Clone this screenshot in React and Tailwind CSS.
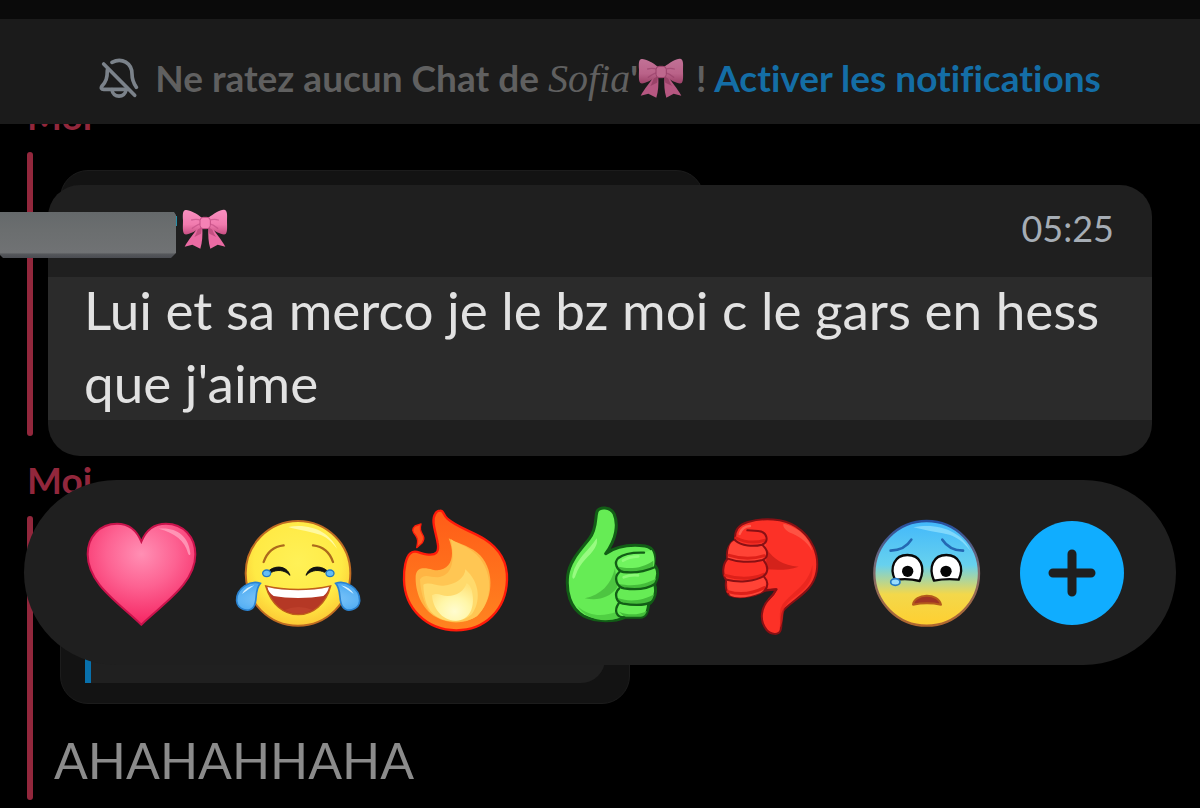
import React from "react";

function Bow({ className }) {
  return (
    <svg viewBox="546 298 136 120" className={className} role="img" aria-label="Nœud rose">
      <defs>
        <linearGradient id="bowWing" x1="0" y1="0" x2="0" y2="1">
          <stop offset="0" stopColor="#f98fc0" />
          <stop offset="0.6" stopColor="#f07bae" />
          <stop offset="1" stopColor="#c84f83" />
        </linearGradient>
      </defs>
      <path d="M594 352 C584 368 564 390 553 411 L576 405 L600 417 C606 398 607 376 606 354 Z" fill="#ea6ba3" />
      <path d="M634 352 C644 368 664 390 675 411 L652 405 L630 417 C624 398 623 376 624 354 Z" fill="#ea6ba3" />
      <path d="M594 352 C590 366 586 376 582 382 L602 372 L605 354 Z" fill="#a83d6c" opacity="0.6" />
      <path d="M634 352 C638 366 642 376 648 382 L627 372 L624 354 Z" fill="#a83d6c" opacity="0.6" />
      <path d="M604 324 C590 312 568 300 556 301 C547 302 547 314 548 332 C548 350 546 366 552 373 C560 378 584 366 604 352 Z" fill="url(#bowWing)" />
      <path d="M624 324 C640 312 660 299 671 300 C681 301 681 314 680 332 C680 350 682 366 676 373 C668 378 644 366 624 352 Z" fill="url(#bowWing)" />
      <path d="M603 332 C592 328 583 328 574 331 M603 342 C592 344 584 350 576 356 M626 332 C637 328 646 328 654 331 M626 342 C637 344 645 350 652 356" fill="none" stroke="#bd4a80" strokeWidth="4" opacity="0.6" strokeLinecap="round" />
      <rect x="599" y="323" width="31" height="34" rx="10" fill="#f582b5" stroke="#c44f85" strokeWidth="3" />
    </svg>
  );
}

function BellOff() {
  return (
    <svg viewBox="50 176 120 120" className="h-10 w-10 shrink-0" fill="none" stroke="#7b828a" strokeWidth="11" strokeLinecap="round" strokeLinejoin="round" aria-hidden="true">
      <path d="M64 194 L157 288" />
      <path d="M89 189 C119 173 149 192 149 224 C149 243 154 252 162 264" />
      <path d="M75 212 C75 237 71 247 59 260 C55 266 57 270 64 270 L136 270" />
      <path d="M89 271 C91 297 129 297 131 271" />
    </svg>
  );
}

function Heart() {
  return (
    <svg viewBox="54 45 378 408" className="block w-full" aria-hidden="true">
      <defs>
        <radialGradient id="heartFill" cx="0.5" cy="0.3" r="0.65">
          <stop offset="0" stopColor="#ff8fb4" />
          <stop offset="0.5" stopColor="#fd6292" />
          <stop offset="1" stopColor="#f62d68" />
        </radialGradient>
      </defs>
      <path d="M244 155 C230 120 205 101 171 101 C119 101 83 141 83 193 C83 280 173 336 244 404 C315 336 406 280 406 193 C406 141 370 101 318 101 C284 101 258 120 244 155 Z" fill="url(#heartFill)" stroke="#c9134c" strokeWidth="6" />
      <path d="M296 116 C345 110 386 135 391 190 C392 197 386 197 384 190 C374 151 346 130 296 116 Z" fill="#ffa3bf" opacity="0.8" />
    </svg>
  );
}

function Joy() {
  return (
    <svg viewBox="525 45 378 408" className="block w-full" aria-hidden="true">
      <defs>
        <radialGradient id="joyFace" cx="0.5" cy="0.4" r="0.6">
          <stop offset="0" stopColor="#fff157" />
          <stop offset="0.7" stopColor="#ffea45" />
          <stop offset="1" stopColor="#fcc935" />
        </radialGradient>
        <radialGradient id="tear" cx="0.5" cy="0.6" r="0.6">
          <stop offset="0" stopColor="#a6dbff" />
          <stop offset="1" stopColor="#4dabf2" />
        </radialGradient>
      </defs>
      <circle cx="714" cy="250" r="157" fill="url(#joyFace)" stroke="#bf6b22" strokeWidth="6" />
      <path d="M685 111 C755 99 810 129 831 176 C812 152 797 139 775 133 C740 121 710 120 685 111 Z" fill="#fff9a0" />
      <path d="M611 216 Q626 171 671 166 M819 216 Q804 171 759 166" fill="none" stroke="#ad6a1c" strokeWidth="7" strokeLinecap="round" />
      <path d="M627 242 C645 226 680 226 690 256 C672 238 650 239 634 247 Z M801 242 C783 226 748 226 738 256 C756 238 778 239 794 247 Z" fill="#111" stroke="#111" strokeWidth="3" />
      <ellipse cx="620" cy="250" rx="12" ry="10" fill="#64bdf5" stroke="#2277c2" strokeWidth="4" />
      <ellipse cx="810" cy="250" rx="12" ry="10" fill="#64bdf5" stroke="#2277c2" strokeWidth="4" />
      <path d="M617 288 C675 302 753 302 812 288 C798 343 758 374 715 374 C671 374 633 343 617 288 Z" fill="#b53825" stroke="#c15e1a" strokeWidth="4" />
      <path d="M622 291 C675 304 753 304 807 291 Q803 309 790 318 C748 326 681 326 641 318 Q626 309 622 291 Z" fill="#fff" />
      <path d="M674 360 Q714 342 757 359 Q715 382 674 360" fill="#d4523c" opacity="0.3" />
      <path d="M601 280 C572 270 528 293 530 333 C532 358 567 370 581 350 C594 332 582 301 601 280 Z M827 280 C856 270 900 293 899 333 C897 358 862 370 848 350 C834 332 846 301 827 280 Z" fill="url(#tear)" stroke="#2b82cf" strokeWidth="5" />
      <path d="M583 286 Q557 291 546 312 Q566 298 583 286 M843 286 Q869 291 881 312 Q861 298 843 286" fill="#d8f1ff" />
    </svg>
  );
}

function Fire() {
  return (
    <svg viewBox="36 45 378 408" className="block w-full" aria-hidden="true">
      <defs>
        <linearGradient id="fireOuter" x1="0" y1="0" x2="0" y2="1">
          <stop offset="0" stopColor="#ff5c18" />
          <stop offset="1" stopColor="#ff8420" />
        </linearGradient>
        <radialGradient id="fireCore" cx="0.55" cy="0.75" r="0.75">
          <stop offset="0" stopColor="#fffcd0" />
          <stop offset="0.5" stopColor="#fff6a8" />
          <stop offset="1" stopColor="#ffe27a" />
        </radialGradient>
      </defs>
      <path d="M123 102 L105 108 C94 117 98 126 106 135 C116 148 113 157 110 173 L127 158 Q134 147 130 138 C123 125 118 119 123 102 Z" fill="#ff501b" stroke="#fa1d0c" strokeWidth="4" strokeLinejoin="round" />
      <path d="M180 62 C192 61 188 73 202 86 C231 112 276 124 313 147 C360 177 383 218 381 270 C378 360 314 421 229 421 C139 420 74 355 72 269 C71 237 77 202 91 190 C105 178 118 190 139 193 C170 198 178 185 173 159 C168 127 152 91 166 71 Q171 62 180 62 Z" fill="url(#fireOuter)" stroke="#ff1a0a" strokeWidth="7" />
      <path d="M206 145 C229 160 260 164 292 188 C344 231 343 321 299 369 C270 402 210 406 169 382 C124 356 105 304 107 257 C111 230 134 233 158 239 C195 247 216 224 216 190 Q216 170 206 145 Z" fill="#ffb544" />
      <path d="M212 147 C240 166 271 170 299 204 C343 262 334 335 291 379 C250 405 189 401 148 365 C131 340 121 300 120 268 C132 250 150 262 172 262 C212 258 228 222 212 147 Z" fill="#ffc653" />
      <path d="M256 238 C302 279 302 337 276 372 C242 403 188 398 160 372 C137 350 131 316 130 284 C151 274 165 289 190 287 C228 284 255 263 256 238 Z" fill="#ffda6c" />
      <path d="M275 300 C288 352 268 392 228 392 C185 393 158 352 156 316 C172 306 183 318 203 318 C231 318 252 303 260 280 Q270 285 275 300 Z" fill="url(#fireCore)" />
    </svg>
  );
}

function ThumbUp() {
  return (
    <svg viewBox="507 45 378 408" className="block w-full" strokeLinecap="round" strokeLinejoin="round" aria-hidden="true">
      <path d="M677 191 C709 169 754 163 795 168 C826 172 826 202 821 223 C838 237 835 265 823 282 C831 300 826 329 806 343 C803 365 799 381 780 382 L735 382 C706 395 651 398 611 378 C569 355 558 304 563 257 C569 211 605 176 628 146 C652 114 644 86 651 65 C658 49 691 50 702 71 C716 103 709 148 677 191 Z" fill="#66ec55" stroke="#125e16" strokeWidth="9" />
      <path d="M650 145 C626 184 590 203 578 253 C574 269 583 271 587 256 C600 215 631 198 645 173 Q654 158 650 145 Z" fill="#a5ff8c" opacity="0.8" />
      <path d="M705 234 C693 285 663 314 614 325 C654 333 689 324 712 292 Z" fill="#45b83b" opacity="0.75" />
      <path d="M592 348 C630 385 680 376 706 367 L720 383 C668 401 616 386 592 348 Z" fill="#50cf43" />
      <path d="M792 188 C759 187 731 191 715 204 C700 218 711 242 730 246 C762 250 799 243 821 232 C825 220 825 195 815 180 Z" fill="#70f45f" stroke="none" />
      <path d="M716 230 C750 239 790 234 820 212 L820 232 C790 246 745 251 720 241 Z M715 281 C752 290 795 286 829 265 L821 283 C791 302 739 304 716 290 Z M713 324 C752 338 793 330 823 312 Q815 343 786 347 C752 351 718 344 713 324 Z M717 365 C743 376 775 376 801 363 Q795 380 783 380 L733 380 Z" fill="#45bd3b" />
      <path d="M792 188 C759 187 731 191 715 204 C700 218 711 242 730 246 C762 250 799 243 826 231 M718 246 C699 263 711 291 732 295 C766 300 801 298 826 281 M717 296 C700 313 710 337 729 341 C761 346 792 347 812 337 M716 340 C701 362 709 382 733 382" fill="none" stroke="#125e16" strokeWidth="7" />
      <path d="M729 212 Q746 200 775 199 M731 262 Q750 254 774 256" fill="none" stroke="#9bff85" strokeWidth="8" opacity="0.7" />
    </svg>
  );
}

function ThumbDown() {
  return (
    <svg viewBox="18 45 378 408" className="block w-full" strokeLinecap="round" strokeLinejoin="round" aria-hidden="true">
      <path d="M228 298 L199 300 C171 317 118 330 89 316 C77 304 75 289 79 270 C64 253 69 221 82 207 C77 185 86 161 105 150 C103 120 115 105 144 96 C190 82 251 85 287 109 C338 142 358 195 350 244 C340 302 290 322 254 357 C239 373 248 399 242 420 C237 437 212 434 200 420 C176 391 184 351 207 327 Q221 314 228 298 Z" fill="#fc3127" stroke="#891014" strokeWidth="6" />
      <path d="M250 101 C299 112 331 147 337 184 C319 150 292 137 267 127 Q247 113 250 101 Z" fill="#ff6250" opacity="0.7" />
      <path d="M200 177 C222 208 248 226 296 230 C263 242 227 239 198 238 Z" fill="#d4221b" />
      <path d="M337 226 C325 285 278 305 247 344 C232 370 246 396 237 420 C263 370 236 368 269 333 C304 306 343 285 337 226 Z" fill="#e2221c" opacity="0.65" />
      <path d="M105 151 C130 168 170 169 197 157 C196 180 204 198 189 207 C154 219 114 212 83 206 C85 175 87 157 105 151 Z M80 270 C118 281 165 274 193 260 C203 285 195 301 181 309 C150 322 112 328 89 316 Z" fill="#ff4336" />
      <path d="M108 144 Q149 164 193 151 M88 196 Q143 213 193 197 M76 256 Q139 275 191 253 M84 305 Q138 321 193 293" fill="none" stroke="#de2019" strokeWidth="9" />
      <path d="M142 121 L174 123 C203 125 208 155 186 164 C160 171 124 168 105 151 M188 166 C207 184 206 204 184 211 C151 219 109 216 83 206 M191 211 C207 231 206 253 182 263 C149 278 106 276 80 269 M192 260 Q211 281 194 302 L230 298 Q221 315 207 327" fill="none" stroke="#891014" strokeWidth="6" />
      <path d="M119 132 Q126 109 150 108" fill="none" stroke="#ff7a67" strokeWidth="7" opacity="0.65" />
    </svg>
  );
}

function Worried() {
  return (
    <svg viewBox="489 45 378 408" className="block w-full" strokeLinecap="round" strokeLinejoin="round" aria-hidden="true">
      <defs>
        <linearGradient id="worriedFace" x1="0" y1="0" x2="0" y2="1">
          <stop offset="0" stopColor="#42b8fb" />
          <stop offset="0.42" stopColor="#67d1ee" />
          <stop offset="0.7" stopColor="#f3d84b" />
          <stop offset="1" stopColor="#ffcf30" />
        </linearGradient>
        <linearGradient id="worriedRim" x1="0" y1="0" x2="0" y2="1">
          <stop offset="0" stopColor="#244fa1" />
          <stop offset="0.45" stopColor="#7c6b71" />
          <stop offset="1" stopColor="#b2672d" />
        </linearGradient>
      </defs>
      <circle cx="680" cy="250" r="157" fill="url(#worriedFace)" stroke="url(#worriedRim)" strokeWidth="7" />
      <path d="M640 112 C718 96 787 127 811 182 C779 143 756 135 728 130 Q685 123 640 112 Z" fill="#a4e9ff" opacity="0.6" />
      <path d="M572 182 Q614 181 634 149 M789 182 Q748 181 727 149" fill="none" stroke="#2468b3" strokeWidth="8" />
      <path d="M585 269 C567 232 584 195 622 195 C661 195 678 230 659 273 Q622 264 585 270 Z M702 272 C684 231 700 195 739 195 C777 195 794 230 776 269 Q739 265 702 272 Z" fill="#fff" stroke="#080808" strokeWidth="7" />
      <circle cx="623" cy="244" r="17" fill="#050505" />
      <circle cx="738" cy="244" r="17" fill="#050505" />
      <ellipse cx="586" cy="276" rx="14" ry="10" fill="#99ddff" stroke="#247ac5" strokeWidth="5" />
      <path d="M639 344 C643 310 715 307 723 344 Q681 336 639 344 Z" fill="#a03524" stroke="#b45b1c" strokeWidth="6" />
    </svg>
  );
}

const reactions = [
  { label: "Cœur", Icon: Heart },
  { label: "Mort de rire", Icon: Joy },
  { label: "Feu", Icon: Fire },
  { label: "Pouce levé", Icon: ThumbUp },
  { label: "Pouce baissé", Icon: ThumbDown },
  { label: "Inquiet", Icon: Worried },
];

function NotificationBanner() {
  return (
    <header className="relative z-10 border-t-[19px] border-[#0a0a0a] bg-[#1b1b1b]">
      <div className="flex h-[105px] items-center justify-center gap-4 pt-3 text-[37px] leading-[48px] font-bold whitespace-nowrap text-[#606060]">
        <BellOff />
        <p className="flex items-center">
          <span>
            Ne ratez aucun Chat de{" "}
            <i className="font-['Liberation_Serif',serif] text-[40px] leading-none font-normal">Sofia</i>'
          </span>
          <Bow className="h-10 w-[46px] opacity-75" />
          <span className="ml-3">
            !{" "}
            <a href="#notifications" className="text-[#146ea6]">Activer les notifications</a>
          </span>
        </p>
      </div>
    </header>
  );
}

function ChatHistory() {
  return (
    <section className="px-[27px] text-[#8b8b8b]">
      <h2 className="-mt-8 h-[60px] text-[37px] leading-[48px] font-bold text-[#92273c]">Moi</h2>
      <div className="flex h-[284px] gap-[27px]">
        <div className="w-[6px] rounded-sm bg-[#92273c]" />
        <div className="mt-[18px] h-[200px] w-[644px] rounded-[28px] border border-[#1c1c1c] bg-[#131313]" />
      </div>
      <h2 className="mt-5 h-[60px] text-[37px] leading-[48px] font-bold text-[#92273c]">Moi</h2>
      <div className="flex h-[284px]">
        <div className="w-[6px] rounded-sm bg-[#92273c]" />
        <div className="flex flex-col">
          <div className="ml-[27px] h-[188px] w-[570px] rounded-[28px] border border-[#1c1c1c] bg-[#131313] px-6 pb-5">
            <div className="h-full rounded-r-[24px] border-l-[6px] border-[#0870ac] bg-[#202020]" />
          </div>
          <p className="mt-6 ml-[21px] text-[50px] leading-[64px]">AHAHAHHAHA</p>
        </div>
      </div>
    </section>
  );
}

function SelectedMessage() {
  return (
    <article className="mx-12 rounded-[32px] bg-[#1f1f1f] pb-9">
      <div className="flex h-[92px] items-center justify-between pr-[38px]">
        <div className="mt-[7px] -ml-12 flex items-center gap-[5px]">
          <svg viewBox="0 0 177 48" className="h-12 w-[177px]" aria-hidden="true">
            <defs>
              <linearGradient id="coverFill" x1="0" y1="0" x2="0" y2="1">
                <stop offset="0" stopColor="#65696b" />
                <stop offset="0.4" stopColor="#6b6e6f" />
                <stop offset="0.88" stopColor="#707274" />
                <stop offset="0.92" stopColor="#55575b" />
                <stop offset="1" stopColor="#4a4c52" />
              </linearGradient>
            </defs>
            <rect x="174" y="5" width="3" height="10" fill="#278fa8" />
            <path d="M0 1 H174 L176 4 V42 L171 47 H3 L0 44 Z" fill="url(#coverFill)" />
          </svg>
          <Bow className="mb-3 h-10 w-[46px]" />
        </div>
        <time className="mb-1.5 text-[36px] leading-[44px] font-normal text-[#a6adb5]">05:25</time>
      </div>
      <div className="flex h-[143px] bg-[#2b2b2b] px-9 text-[53px] leading-[73px] text-[#e2e2e2]">
        <p className="-mt-1">Lui et sa merco je le bz moi c le gars en hess que j'aime</p>
      </div>
    </article>
  );
}

function ReactionBar() {
  return (
    <div role="toolbar" aria-label="Réactions" className="mx-6 flex h-[185px] items-center justify-between rounded-full bg-[#1f1f1f] pr-[52px] pl-[54px]">
      {reactions.map(({ label, Icon }) => (
        <button key={label} type="button" aria-label={label} className="w-[126px]">
          <Icon />
        </button>
      ))}
      <button type="button" aria-label="Ajouter une réaction" className="w-[104px]">
        <svg viewBox="0 0 104 104" className="block w-full" aria-hidden="true">
          <circle cx="52" cy="52" r="52" fill="#10adff" />
          <path d="M52 33 V71 M33 52 H71" stroke="#1f1f1f" strokeWidth="9" strokeLinecap="round" />
        </svg>
      </button>
    </div>
  );
}

export default function App() {
  return (
    <main className="relative min-h-screen overflow-hidden bg-black font-['Lato',sans-serif] [font-variant-ligatures:none]">
      <NotificationBanner />
      <ChatHistory />
      <div className="absolute inset-x-0 top-[185px] flex flex-col gap-6">
        <SelectedMessage />
        <ReactionBar />
      </div>
    </main>
  );
}
